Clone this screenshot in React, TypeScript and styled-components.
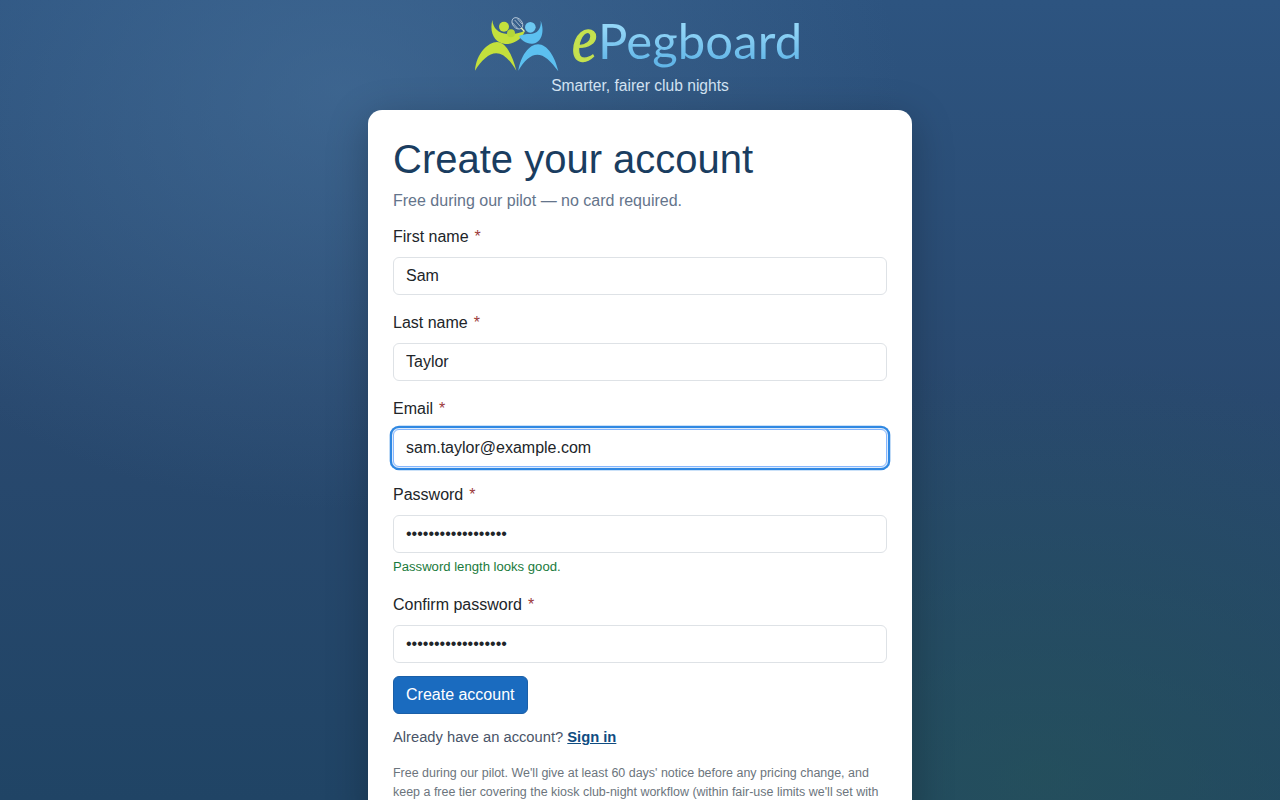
import styled, { createGlobalStyle } from "styled-components";

const GlobalStyle = createGlobalStyle`
	html, body {
		margin: 0;
		height: 100%;
		overflow: hidden;
	}

	body {
		font-family: "Liberation Sans", Arial, sans-serif;
		font-size: 16px;
		color: #212529;
	}

	* {
		box-sizing: border-box;
	}
`;

const Page = styled.div`
	height: 100vh;
	overflow: hidden;
	display: flex;
	flex-direction: column;
	align-items: center;
	background:
		radial-gradient(560px 420px at 340px 90px, rgba(74, 116, 158, 0.55), rgba(74, 116, 158, 0) 100%),
		radial-gradient(620px 420px at 1040px 780px, rgba(38, 84, 88, 0.65), rgba(38, 84, 88, 0) 100%),
		linear-gradient(180deg, #2d5480 0%, #29496f 50%, #204465 100%);
`;

const Brand = styled.header`
	height: 110px;
	flex: none;
	display: flex;
	flex-direction: column;
	align-items: center;
	padding-top: 10px;
`;

const LogoRow = styled.div`
	display: flex;
	align-items: flex-start;
	height: 67px;
	margin-left: -9px;
`;

const LogoMark = styled.svg`
	width: 100px;
	height: 70px;
	margin-right: 3px;
`;

const WordE = styled.span`
	display: inline-block;
	margin-right: -3px;
	font-family: "Liberation Serif", serif;
	font-style: italic;
	font-size: 66px;
	line-height: 57px;
	color: #c5e24f;
	-webkit-text-stroke: 1.3px #c5e24f;
	transform: scaleX(0.85);
	transform-origin: left center;
`;

const WordPeg = styled.span`
	font-family: Lato, sans-serif;
	font-weight: 400;
	font-size: 49px;
	line-height: 61px;
	letter-spacing: 0.1px;
	background: linear-gradient(180deg, #93d6f7 30%, #62b6e8 85%);
	-webkit-background-clip: text;
	background-clip: text;
	color: transparent;
`;

const Tagline = styled.div`
	font-size: 15.6px;
	line-height: 18px;
	color: #d4e4f4;
`;

const Card = styled.main`
	width: 544px;
	flex: none;
	background: #fff;
	border-radius: 14px;
	padding: 25px;
	box-shadow: 0 10px 40px rgba(0, 0, 0, 0.25);
`;

const Title = styled.h1`
	margin: 0 0 6px;
	font-size: 40px;
	line-height: 48px;
	font-weight: 400;
	color: #1a3d60;
`;

const Lead = styled.p`
	margin: 0 0 12px;
	line-height: 24px;
	color: #64748b;
`;

const Field = styled.div`
	margin-bottom: 16px;
`;

const Label = styled.label`
	display: block;
	margin-bottom: 8px;
	line-height: 24px;
`;

const Req = styled.span`
	margin-left: 6px;
	color: #9c3a3a;
`;

const Input = styled.input<{ $focused?: boolean }>`
	display: block;
	width: 100%;
	height: 38px;
	padding: 6px 12px;
	font: inherit;
	color: #212529;
	background: #fff;
	border: 1px solid ${p => (p.$focused ? "#86b7fe" : "#dee2e6")};
	border-radius: 6px;
	outline: none;
	box-shadow: ${p => (p.$focused ? "0 0 0 1px #dceafc, 0 0 0 3.3px #3088e2" : "none")};
`;

const Help = styled.div`
	margin-top: 4px;
	font-size: 13.12px;
	line-height: 20px;
	color: #1a7a3c;
`;

const Submit = styled.button`
	display: block;
	height: 38px;
	margin-top: -3px;
	padding: 0 12px;
	font: inherit;
	color: #fff;
	background: #1a6bbf;
	border: 1px solid #1a5fa8;
	border-radius: 6px;
`;

const SignIn = styled.p`
	margin: 11px 0 0;
	font-size: 14.72px;
	line-height: 24px;
	color: #4a5568;

	a {
		color: #0f4c81;
		font-weight: 700;
		text-decoration: underline;
	}
`;

const Fine = styled.p`
	margin: 15px 0 0;
	font-size: 12.48px;
	line-height: 19px;
	color: #6c757d;
`;

function Logo() {
	return (
		<LogoMark viewBox="0 0 300 210" aria-hidden="true">
			<path fill="#c3e03c" d="M18 182C22 130 58 96 84 96C112 96 132 140 142 182C122 148 102 130 82 130C60 130 36 152 18 182Z"/>
			<path fill="#5cc0f0" d="M148 182C155 138 180 103 207 103C235 103 258 140 268 184C245 152 225 134 205 134C185 134 165 152 148 182Z"/>
			<path fill="#c3e03c" d="M70 30C72 55 88 70 115 72C135 73 150 70 168 62C160 85 135 104 108 102C78 99 60 70 70 30Z"/>
			<path fill="#5cc0f0" d="M215 32C218 55 205 72 182 72C170 72 160 74 150 78C155 90 172 102 190 101C218 98 228 65 215 32Z"/>
			<circle cx="105" cy="50" r="15" fill="#c3e03c"/>
			<circle cx="126" cy="70" r="12" fill="#b4d638"/>
			<circle cx="184" cy="52" r="16" fill="#6cc8f2"/>
			<g fill="none" stroke="#dfeaf2" strokeWidth="2">
				<ellipse cx="145" cy="40" rx="14" ry="19" transform="rotate(-40 145 40)"/>
				<path d="M137 30L155 50M145 26L159 42M130 38L147 56"/>
				<path d="M157 54L166 64" stroke="#e9f3c0" strokeWidth="4"/>
			</g>
		</LogoMark>
	);
}

export default function App() {
	return (
		<Page>
			<GlobalStyle/>
			<Brand>
				<LogoRow>
					<Logo/>
					<WordE>e</WordE>
					<WordPeg>Pegboard</WordPeg>
				</LogoRow>
				<Tagline>Smarter, fairer club nights</Tagline>
			</Brand>
			<Card>
				<Title>Create your account</Title>
				<Lead>Free during our pilot — no card required.</Lead>
				<Field>
					<Label>First name<Req>*</Req></Label>
					<Input defaultValue="Sam"/>
				</Field>
				<Field>
					<Label>Last name<Req>*</Req></Label>
					<Input defaultValue="Taylor"/>
				</Field>
				<Field>
					<Label>Email<Req>*</Req></Label>
					<Input $focused defaultValue="sam.taylor@example.com"/>
				</Field>
				<Field>
					<Label>Password<Req>*</Req></Label>
					<Input type="password" defaultValue="samtaylorpassword1"/>
					<Help>Password length looks good.</Help>
				</Field>
				<Field>
					<Label>Confirm password<Req>*</Req></Label>
					<Input type="password" defaultValue="samtaylorpassword1"/>
				</Field>
				<Submit>Create account</Submit>
				<SignIn>Already have an account? <a href="#">Sign in</a></SignIn>
				<Fine>
					Free during our pilot. We'll give at least 60 days' notice before any pricing change, and
					keep a free tier covering the kiosk club-night workflow (within fair-use limits we'll set with
				</Fine>
			</Card>
		</Page>
	);
}
